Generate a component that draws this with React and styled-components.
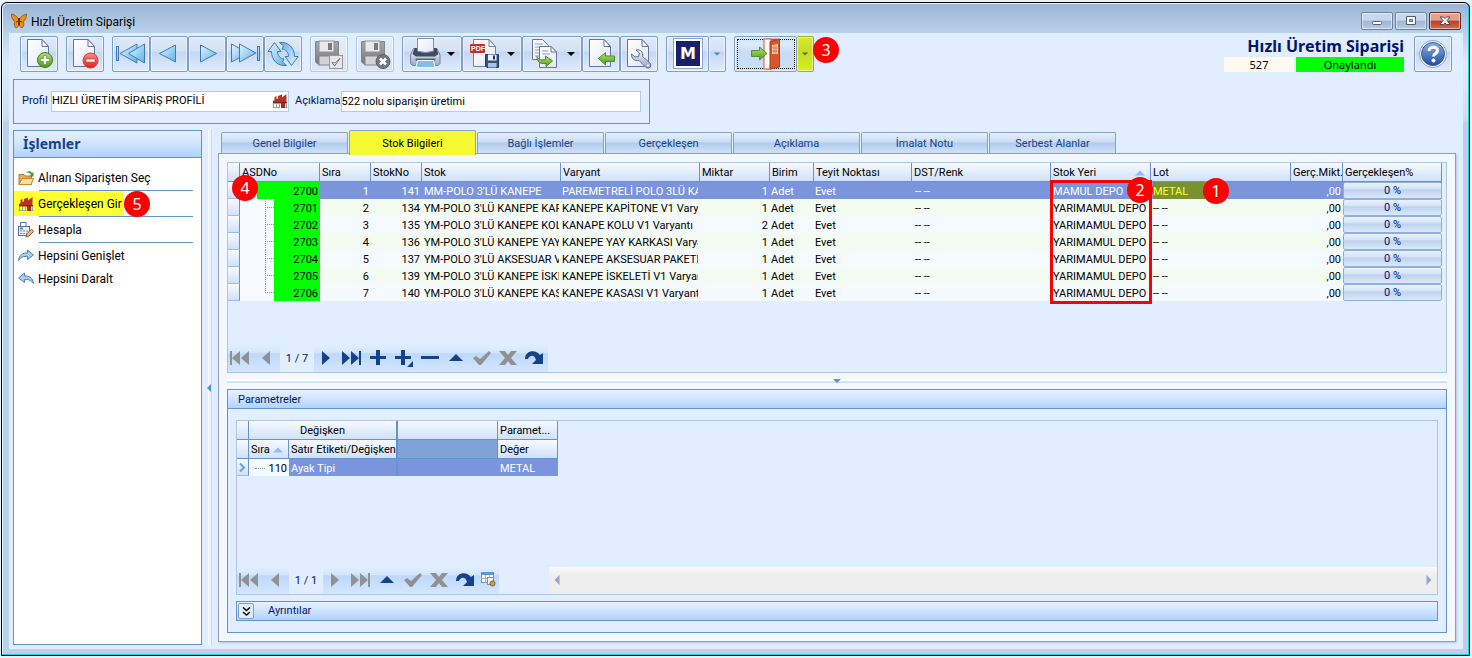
import React from "react";
import styled, { createGlobalStyle, css } from "styled-components";

const stockRows = [
  ["2700", "1", "141", "MM-POLO 3'LÜ KANEPE", "PAREMETRELİ POLO 3LÜ KA", "1", "MAMUL DEPO", "METAL"],
  ["2701", "2", "134", "YM-POLO 3'LÜ KANEPE KAPİ", "KANEPE KAPİTONE V1 Varya", "1", "YARIMAMUL DEPO", "-- --"],
  ["2702", "3", "135", "YM-POLO 3'LÜ KANEPE KOLU", "KANAPE KOLU V1 Varyantı", "2", "YARIMAMUL DEPO", "-- --"],
  ["2703", "4", "136", "YM-POLO 3'LÜ KANEPE YAY K", "KANEPE YAY KARKASI Varya", "1", "YARIMAMUL DEPO", "-- --"],
  ["2704", "5", "137", "YM-POLO 3'LÜ AKSESUAR VE", "KANEPE AKSESUAR PAKETLE", "1", "YARIMAMUL DEPO", "-- --"],
  ["2705", "6", "139", "YM-POLO 3'LÜ KANEPE İSKEL", "KANEPE İSKELETİ V1 Varyan", "1", "YARIMAMUL DEPO", "-- --"],
  ["2706", "7", "140", "YM-POLO 3'LÜ KANEPE KASA", "KANEPE KASASI V1 Varyantı", "1", "YARIMAMUL DEPO", "-- --"],
];

const stockColumns = [
  ["", 12],
  ["ASDNo", 80],
  ["Sıra", 51],
  ["StokNo", 51],
  ["Stok", 139],
  ["Varyant", 139],
  ["Miktar", 70],
  ["Birim", 44],
  ["Teyit Noktası", 98],
  ["DST/Renk", 139],
  ["Stok Yeri", 100],
  ["Lot", 140],
  ["Gerç.Mikt.", 52],
  ["Gerçekleşen%", 99],
];

const tabs = [
  "Genel Bilgiler",
  "Stok Bilgileri",
  "Bağlı İşlemler",
  "Gerçekleşen",
  "Açıklama",
  "İmalat Notu",
  "Serbest Alanlar",
];

/* ---------- icons ---------- */

function Icon({ size = 32, children }) {
  return (
    <svg width={size} height={size} viewBox={`0 0 ${size} ${size}`} aria-hidden="true">
      {children}
    </svg>
  );
}

function Defs() {
  return (
    <HiddenSvg width="0" height="0" aria-hidden="true">
      <defs>
        <linearGradient id="blue" x1="0" y1="0" x2="1" y2="1">
          <stop offset="0" stopColor="#e4f6ff" />
          <stop offset="1" stopColor="#5fb0e6" />
        </linearGradient>
        <linearGradient id="paper" x1="0" y1="0" x2="1" y2="1">
          <stop offset="0" stopColor="#ffffff" />
          <stop offset="1" stopColor="#e3e8f5" />
        </linearGradient>
        <linearGradient id="green" x1="0" y1="0" x2="0" y2="1">
          <stop offset="0" stopColor="#b5e07a" />
          <stop offset="1" stopColor="#4d9c17" />
        </linearGradient>
        <linearGradient id="red" x1="0" y1="0" x2="0" y2="1">
          <stop offset="0" stopColor="#ff8d85" />
          <stop offset="1" stopColor="#e3201b" />
        </linearGradient>
        <linearGradient id="gray" x1="0" y1="0" x2="0" y2="1">
          <stop offset="0" stopColor="#a9a9ab" />
          <stop offset="1" stopColor="#77777a" />
        </linearGradient>
        <linearGradient id="steel" x1="0" y1="0" x2="0" y2="1">
          <stop offset="0" stopColor="#f4f6fb" />
          <stop offset="1" stopColor="#9aa6bf" />
        </linearGradient>
        <linearGradient id="help" x1="0" y1="0" x2="0" y2="1">
          <stop offset="0" stopColor="#89b0e2" />
          <stop offset="1" stopColor="#1f4fa0" />
        </linearGradient>
      </defs>
    </HiddenSvg>
  );
}

const Paper = () => (
  <>
    <path d="M4.5 1.5H19L25.5 8.5V28.5H4.5Z" fill="url(#paper)" stroke="#66749f" />
    <path d="M19 1.5V8.5H25.5Z" fill="#fff" stroke="#66749f" />
  </>
);

const NewIcon = () => (
  <Icon>
    <Paper />
    <circle cx="22" cy="22" r="7.5" fill="url(#green)" stroke="#3c7a1c" />
    <path d="M20.5 17.5h3v3h3v3h-3v3h-3v-3h-3v-3h3z" fill="#fff" stroke="#4d8a2c" strokeWidth="0.6" />
  </Icon>
);
const DeleteIcon = () => (
  <Icon>
    <Paper />
    <circle cx="21.5" cy="22.5" r="7.5" fill="url(#red)" stroke="#cf3a35" />
    <rect x="17" y="21" width="9" height="3" fill="#fff" stroke="#b52420" strokeWidth="0.5" />
  </Icon>
);
const FirstIcon = () => (
  <Icon>
    <g fill="url(#blue)" stroke="#4079b5">
      <rect x="1.5" y="8.5" width="2" height="14" />
      <path d="M5 15.500L22 6V25Z" />
      <path d="M13.500 15.500L29.500 6V25Z" />
    </g>
  </Icon>
);
const PrevIcon = () => (
  <Icon>
    <path d="M6.500 15.500L22.500 7V24Z" fill="url(#blue)" stroke="#4079b5" />
  </Icon>
);
const NextIcon = () => (
  <Icon>
    <path d="M25.500 15.500L9.500 7V24Z" fill="url(#blue)" stroke="#4079b5" />
  </Icon>
);
const LastIcon = () => (
  <Icon>
    <g fill="url(#blue)" stroke="#4079b5">
      <path d="M19 15L2.500 6V24Z" />
      <path d="M27 15L10.500 6V24Z" />
      <rect x="28.500" y="8.500" width="2" height="14" />
    </g>
  </Icon>
);
const refreshArrow = "M7.500 4.500L14 13.500H10.500C10.500 17.500 13 20.500 17 21L15.500 24L19.500 27.500C10.500 28.500 4.500 22 4.500 13.500H1Z";
const RefreshIcon = () => (
  <Icon>
    <g fill="url(#blue)" stroke="#3b79b8" strokeLinejoin="round">
      <path d={refreshArrow} />
      <path d={refreshArrow} transform="rotate(180 16 16)" />
    </g>
  </Icon>
);
const GrayFloppy = () => (
  <>
    <path d="M2.500 3.500H25.500V26.500H5.500L2.500 24Z" fill="url(#gray)" stroke="#858588" />
    <rect x="6" y="3" width="15" height="11" fill="#e9e9ec" stroke="#929296" />
    <rect x="15" y="5" width="4" height="7" fill="#7a7a7e" />
    <rect x="6" y="18" width="16" height="9" fill="#d4d4d8" stroke="#858588" />
  </>
);
const SaveIcon = () => (
  <Icon>
    <GrayFloppy />
    <rect x="16.500" y="17.500" width="13" height="13" fill="#e6e6ea" stroke="#97979b" />
    <path d="M19 24.500L21.500 28L27 20.500L22 25Z" fill="#fff" stroke="#77777a" />
  </Icon>
);
const CancelIcon = () => (
  <Icon>
    <GrayFloppy />
    <circle cx="24" cy="23.500" r="7" fill="#77777a" stroke="#616165" />
    <path d="M21 20.500L27 26.500M27 20.500L21 26.500" stroke="#fff" strokeWidth="2.600" />
  </Icon>
);
const PrintIcon = () => (
  <Icon>
    <path d="M1.500 17L4.500 10.500H28L31 17V25.500L29 27.500H3.500L1.500 25.500Z" fill="url(#steel)" stroke="#76829f" />
    <path d="M5.500 10H27.500L29.500 16L26 18.500H7L3.500 16Z" fill="#3f4a63" />
    <path d="M8.500 0.500H24.500V13Q16.500 16 8.500 13Z" fill="url(#paper)" stroke="#8490ac" />
    <path d="M6.500 20.500h20v2h-20z" fill="#556080" />
    <path d="M8.500 22.500H24.500L26 29.500H7Z" fill="#7cc0ee" stroke="#f2f8ff" />
  </Icon>
);
const PdfIcon = () => (
  <Icon>
    <path d="M4.500 1.500H20L26.500 8.500V28.500H4.500Z" fill="url(#paper)" stroke="#7482ab" />
    <path d="M20 1.500V8.500H26.500Z" fill="#fff" stroke="#7482ab" />
    <rect x="1" y="6" width="15" height="9" rx="1" fill="#cf2b2b" />
    <text x="2" y="13" fontSize="7" fontWeight="700" fill="#fff" fontFamily="Liberation Sans, sans-serif">PDF</text>
    <path d="M16.500 16.500H29.500V29.500H18L16.500 28Z" fill="#3f527c" stroke="#22325a" />
    <rect x="19" y="16.500" width="8.500" height="6" fill="#e8f1ff" />
    <rect x="24" y="17.500" width="2" height="4" fill="#22325a" />
    <rect x="19" y="25" width="8.500" height="4.500" fill="#9fc8ee" />
  </Icon>
);
const CopyIcon = () => (
  <Icon>
    <path d="M3.500 1.500H13.500L19.500 7.500V21.500H3.500Z" fill="url(#paper)" stroke="#66749f" />
    <path d="M6 6h8M6 9h6M6 12h5M6 15h5M6 18h5" stroke="#8a9cc7" />
    <path d="M10.500 8.500H22L27.500 14V29.500H10.500Z" fill="url(#paper)" stroke="#66749f" />
    <path d="M22 8.500V14H27.500Z" fill="#fff" stroke="#66749f" />
    <path d="M13 13h6M13 16h8" stroke="#8a9cc7" />
    <path d="M8 18.500C10 22 13 22.500 16.500 21.500V18L23.500 23L17 28.500V25.500C11 26 8 24 8 18.500Z" fill="url(#green)" stroke="#4b8f22" />
  </Icon>
);
const ImportIcon = () => (
  <Icon>
    <Paper />
    <path d="M13.500 20.500L20.500 14.500V18H29.500V23.500H20.500V27Z" fill="url(#green)" stroke="#4b8f22" />
  </Icon>
);
const ToolIcon = () => (
  <Icon>
    <Paper />
    <path
      d="M8.500 16C8 20 11.500 23.500 16 22.500L23 29.500Q25.500 31 27.500 29Q28.500 27 27 25L19.500 18.500C20.500 14.500 18 11 13 12L16.500 15L15.500 18.500L12 19Z"
      fill="url(#steel)"
      stroke="#5f6e8f"
    />
    <circle cx="25" cy="27.500" r="1" fill="#fff" />
  </Icon>
);
const MIcon = () => (
  <Icon>
    <rect x="1.500" y="0.500" width="29" height="30" fill="#fff" stroke="#8fa3d0" />
    <rect x="4" y="3" width="24" height="25" fill="#18206c" />
    <text x="16" y="21" textAnchor="middle" fontSize="16" fontWeight="700" fill="#fff" fontFamily="DejaVu Sans, sans-serif">M</text>
  </Icon>
);
const ExitIcon = () => (
  <Icon>
    <path d="M16 1.500H29M16 30.500H21" stroke="#cf4a20" strokeWidth="1.500" />
    <rect x="14" y="1" width="7" height="30" fill="#fff" stroke="#d2562c" />
    <path d="M20 3.500L29.500 1V29L20 31Z" fill="#d9552a" stroke="#b43f18" />
    <path d="M22 7L28 6V16H22Z" fill="#ecdcc0" />
    <path d="M24 6.500V16M26 6.500V16M22 10h6M22 13h6" stroke="#b4521f" strokeWidth="0.600" />
    <path d="M1.500 12.500H9.500V9L17 15.500L9.500 22V18.500H1.500Z" fill="url(#green)" stroke="#51912e" />
  </Icon>
);
const HelpIcon = () => (
  <Icon>
    <circle cx="16" cy="16" r="13.500" fill="#fff" stroke="#8e9dbd" />
    <circle cx="16" cy="16" r="11.500" fill="url(#help)" stroke="#32599c" />
    <path d="M12 13C12 8 20.500 8 20.500 12.500C20.500 15.500 16.500 15.500 16.500 18.500" fill="none" stroke="#fff" strokeWidth="3" />
    <circle cx="16.500" cy="22.500" r="2" fill="#fff" />
  </Icon>
);
const ButterflyIcon = () => (
  <Icon size={16}>
    <path
      d="M8 7C6.500 3.500 3.500 1.500 0.500 1C0.500 4.500 1.500 7.500 4 8.500C2.500 10 3 13.500 5 15C7 14.500 8 12 8 9.500C8 12 9 14.500 11 15C13 13.500 13.500 10 12 8.500C14.500 7.500 15.500 4.500 15.500 1C12.500 1.500 9.500 3.500 8 7Z"
      fill="#f08f12"
      stroke="#8f4c12"
      strokeWidth="0.800"
    />
    <path d="M8 5V12" stroke="#4d260b" strokeWidth="1.500" />
    <path d="M5 9L7.500 8M11 9L8.500 8" stroke="#6b370c" />
  </Icon>
);
const FactoryIcon = () => (
  <Icon size={16}>
    <path d="M1 8L2.500 7V4L4.500 3V6L6 5.500V3L10 1.500V4.500L14.500 1V9L15.500 10H1Z" fill="#b5321f" />
    <path d="M1 9H15V10.500H1Z" fill="#7e2418" />
    <path d="M1.500 10.500V14.500M4.500 11V14.500M7.500 11V14.500M14.500 10.500V15" stroke="#93a0ab" />
    <path d="M9 10H13V15H9Z" fill="#a62a1c" />
    <path d="M1 14.500H8M13 14.500H15.500" stroke="#93a0ab" />
  </Icon>
);
const FolderIcon = () => (
  <Icon size={16}>
    <path d="M1 14.500V4.500H6L7.500 6H13.500V14.500Z" fill="#e3ac55" stroke="#b57a2b" />
    <path d="M1 14.500L4 8.500H15.500L13 14.500Z" fill="#fbdf9c" stroke="#c1873a" />
    <path d="M8 3C10 0.500 13 1 14 3L15.500 2V6.500H11.500L13 4.500C12 3 10 2.500 8 3Z" fill="#4f9438" />
  </Icon>
);
const CalcIcon = () => (
  <Icon size={16}>
    <path d="M2.500 0.500H8V4.500H2.500Z" fill="#fff" stroke="#5b6f9c" />
    <rect x="0.500" y="4.500" width="11" height="9" fill="#e9effb" stroke="#5b6f9c" />
    <path d="M2 6.500h3" stroke="#3ea75c" strokeWidth="2" />
    <path d="M2 9h8M2 11.500h8" stroke="#7488b6" strokeDasharray="2 1" />
    <path d="M8 15L9 11.500L13.500 7L15.500 9.500L11 14Z" fill="#f0b878" stroke="#8b6038" />
  </Icon>
);
const CurveIcon = ({ flip }) => (
  <Icon size={16}>
    <g transform={flip ? "translate(16 0) scale(-1 1)" : undefined}>
      <path d="M0.500 12.500C1 7 5 4.500 9.500 5V2L15.500 7L9.500 11.500V8.500C6 8 3 9 0.500 12.500Z" fill="#a9cdf0" stroke="#4a7fb8" />
    </g>
  </Icon>
);
const TableIcon = () => (
  <Icon size={16}>
    <rect x="1.500" y="1.500" width="12" height="10" fill="#fff" stroke="#6b94c9" />
    <rect x="1" y="1" width="13" height="3" fill="#5b96dd" />
    <path d="M5.500 4v8M9.500 4v8M1 7.500h12" stroke="#9ab6d9" />
    <rect x="7.500" y="6.500" width="6" height="7" fill="#eef3fb" stroke="#7a8fb5" />
    <circle cx="12.500" cy="12.500" r="2.500" fill="#d59a4b" stroke="#8c5c28" />
  </Icon>
);

const navPaths = {
  first: "M1 5h2v14h-2zM11 5v14l-8-7zM20 5v14l-8-7z",
  prev: "M15 5v14l-8-7z",
  next: "M7 5v14l8-7z",
  last: "M1 5v14l8-7zM10 5v14l8-7zM18 5h2v14h-2z",
  plus: "M9 4h4v6h6v3h-6v6h-4v-6h-6v-3h6z",
  plusMore: "M8 4h4v6h6v3h-6v6h-4v-6h-6v-3h6zM20 15v6h-6z",
  minus: "M2 10h18v3h-18z",
  up: "M4 15l7-7l7 7z",
  check: "M2 12l3-2l4 3l9-8l2 2l-10 12h-2z",
  cross: "M2 5h6l3 4l3-4h6l-6 7l6 7h-6l-3-4l-3 4h-6l6-7z",
  redo: "M2 13C2 4 13 3 17 9l3-2v11h-11l4-4C12 9 7 8 5 13z",
};

function NavButton({ name, label, disabled }) {
  return (
    <NavBtn type="button" aria-label={label} disabled={disabled}>
      <Icon size={22}>
        <path d={navPaths[name]} fill={disabled ? "#919191" : "#16428b"} />
      </Icon>
    </NavBtn>
  );
}

const trianglePaths = {
  down: "M0 2h8L4 6z",
  up: "M0 6h8L4 2z",
  left: "M6 0v8L2 4z",
  right: "M2 0v8l4-4z",
};

function Triangle({ dir, color, size = 8 }) {
  return (
    <svg width={size} height={size} viewBox="0 0 8 8" aria-hidden="true">
      <path d={trianglePaths[dir]} fill={color} />
    </svg>
  );
}

/* ---------- page parts ---------- */

function Toolbar() {
  return (
    <ToolbarRow>
      <ToolGroup><ToolButton aria-label="Yeni"><NewIcon /></ToolButton></ToolGroup>
      <ToolGroup><ToolButton aria-label="Sil"><DeleteIcon /></ToolButton></ToolGroup>
      <ToolGroup>
        <ToolButton aria-label="İlk"><FirstIcon /></ToolButton>
        <ToolButton aria-label="Önceki"><PrevIcon /></ToolButton>
        <ToolButton aria-label="Sonraki"><NextIcon /></ToolButton>
        <ToolButton aria-label="Son"><LastIcon /></ToolButton>
        <ToolButton aria-label="Yenile"><RefreshIcon /></ToolButton>
      </ToolGroup>
      <ToolGroup><ToolButton aria-label="Kaydet" disabled><SaveIcon /></ToolButton></ToolGroup>
      <ToolGroup><ToolButton aria-label="İptal" disabled><CancelIcon /></ToolButton></ToolGroup>
      <ToolGroup>
        <ToolButton $wide aria-label="Yazdır"><PrintIcon /><Triangle dir="down" color="#000" /></ToolButton>
        <ToolButton $wide aria-label="PDF kaydet"><PdfIcon /><Triangle dir="down" color="#000" /></ToolButton>
        <ToolButton $wide aria-label="Kopyala"><CopyIcon /><Triangle dir="down" color="#000" /></ToolButton>
        <ToolButton aria-label="İçe aktar"><ImportIcon /></ToolButton>
        <ToolButton aria-label="Ayarlar"><ToolIcon /></ToolButton>
      </ToolGroup>
      <ToolGroup>
        <SplitMain aria-label="M"><MIcon /></SplitMain>
        <SplitArrow aria-label="M seçenekleri"><Triangle dir="down" size={6} color="#4f7fbf" /></SplitArrow>
      </ToolGroup>
      <ToolGroup>
        <SplitMain $exit aria-label="Çıkış"><FocusBox><ExitIcon /></FocusBox></SplitMain>
        <SplitArrow $marked aria-label="Çıkış seçenekleri">
          <Triangle dir="down" size={6} color="#55701d" />
        </SplitArrow>
        <ExitBadge>3</ExitBadge>
      </ToolGroup>
      <Status>
        <StatusTitle>Hızlı Üretim Siparişi</StatusTitle>
        <StatusRow>
          <StatusNo>527</StatusNo>
          <StatusState>Onaylandı</StatusState>
        </StatusRow>
      </Status>
      <ToolButton aria-label="Yardım"><HelpIcon /></ToolButton>
    </ToolbarRow>
  );
}

function Sidebar() {
  return (
    <SidePanel>
      <SideTitle>İşlemler</SideTitle>
      <SideList>
        <SideItem $line><SideButton type="button"><FolderIcon />Alınan Siparişten Seç</SideButton></SideItem>
        <SideItem $line>
          <SideButton type="button" $marked><FactoryIcon />Gerçekleşen Gir</SideButton>
          <SideBadge>5</SideBadge>
        </SideItem>
        <SideItem $line><SideButton type="button"><CalcIcon />Hesapla</SideButton></SideItem>
        <SideItem><SideButton type="button"><CurveIcon />Hepsini Genişlet</SideButton></SideItem>
        <SideItem><SideButton type="button"><CurveIcon flip />Hepsini Daralt</SideButton></SideItem>
      </SideList>
    </SidePanel>
  );
}

function StockGrid() {
  return (
    <GridBox>
      <GridTable>
        <colgroup>
          {stockColumns.map(([name, width]) => <Col key={name} $w={width} />)}
        </colgroup>
        <thead>
          <tr>
            {stockColumns.map(([name]) => (
              <HeadCell key={name}>
                {name === "Stok Yeri" ? (
                  <SortHead>{name}<Triangle dir="up" size={10} color="#8fbdf5" /></SortHead>
                ) : name}
              </HeadCell>
            ))}
          </tr>
        </thead>
        <tbody>
          {stockRows.map(([no, sira, stokNo, stok, varyant, miktar, yer, lot], i) => (
            <Row key={no} $selected={i === 0}>
              <MarkerCell>
                {i === 0 && <RowBadge>4</RowBadge>}
              </MarkerCell>
              <TreeCell>
                <TreeInner>
                  {i > 0 && <Branch $last={i === stockRows.length - 1} />}
                  <GreenCell>{no}</GreenCell>
                </TreeInner>
              </TreeCell>
              <Cell $right>{sira}</Cell>
              <Cell $right>{stokNo}</Cell>
              <Cell $pad={2} $gutter>{stok}</Cell>
              <Cell $gutter>{varyant}</Cell>
              <Cell $right>{miktar}</Cell>
              <Cell>Adet</Cell>
              <Cell>Evet</Cell>
              <Cell $pad={3}>-- --</Cell>
              <AnchorCell $pad={2}>
                {yer}
                {i === 0 && <RedFrame />}
                {i === 0 && <DepoBadge>2</DepoBadge>}
              </AnchorCell>
              <AnchorCell $pad={2} $flush={i === 0}>
                {i === 0 ? <LotMark>{lot}</LotMark> : lot}
                {i === 0 && <LotBadge>1</LotBadge>}
              </AnchorCell>
              <Cell $right>,00</Cell>
              <ButtonCell><PercentButton type="button">0 %</PercentButton></ButtonCell>
            </Row>
          ))}
        </tbody>
      </GridTable>
      <NavBar>
        <NavButton name="first" label="İlk" disabled />
        <NavButton name="prev" label="Önceki" disabled />
        <NavCount>1 / 7</NavCount>
        <NavButton name="next" label="Sonraki" />
        <NavButton name="last" label="Son" />
        <NavButton name="plus" label="Ekle" />
        <NavButton name="plusMore" label="Alt kayıt ekle" />
        <NavButton name="minus" label="Sil" />
        <NavButton name="up" label="Düzenle" />
        <NavButton name="check" label="Onayla" disabled />
        <NavButton name="cross" label="Vazgeç" disabled />
        <NavButton name="redo" label="Yenile" />
      </NavBar>
    </GridBox>
  );
}

function Parameters() {
  return (
    <Group>
      <GroupTitle>Parametreler</GroupTitle>
      <GroupBody>
        <ParamBox>
          <ParamTable>
            <colgroup>
              <Col $w={12} /><Col $w={40} /><Col $w={109} /><Col $w={100} /><Col $w={60} />
            </colgroup>
            <thead>
              <tr>
                <HeadCell />
                <HeadCell colSpan={2} $center $thick>Değişken</HeadCell>
                <HeadCell />
                <HeadCell>Paramet...</HeadCell>
              </tr>
              <tr>
                <HeadCell />
                <HeadCell><SortHead>Sıra<Triangle dir="up" size={10} color="#8fbdf5" /></SortHead></HeadCell>
                <HeadCell $thick>Satır Etiketi/Değişken</HeadCell>
                <EmptyHead />
                <HeadCell>Değer</HeadCell>
              </tr>
            </thead>
            <tbody>
              <Row $selected>
                <MarkerCell>
                  <svg width="8" height="9" viewBox="0 0 8 9" aria-hidden="true">
                    <path d="M2 0.500L6 4.500L2 8.500" fill="none" stroke="#6ba3e0" strokeWidth="2" />
                  </svg>
                </MarkerCell>
                <WhiteCell><Dots />110</WhiteCell>
                <Cell $thick $pad={2}>Ayak Tipi</Cell>
                <Cell />
                <Cell $pad={2}>METAL</Cell>
              </Row>
            </tbody>
          </ParamTable>
          <ParamFoot>
            <NavBar>
              <NavButton name="first" label="İlk" disabled />
              <NavButton name="prev" label="Önceki" disabled />
              <NavCount>1 / 1</NavCount>
              <NavButton name="next" label="Sonraki" disabled />
              <NavButton name="last" label="Son" disabled />
              <NavButton name="up" label="Düzenle" />
              <NavButton name="check" label="Onayla" disabled />
              <NavButton name="cross" label="Vazgeç" disabled />
              <NavButton name="redo" label="Yenile" />
              <NavBtn type="button" $small aria-label="Tablo"><TableIcon /></NavBtn>
            </NavBar>
            <ScrollBar>
              <ScrollArrow type="button" aria-label="Sola kaydır"><Triangle dir="left" size={10} color="#98a5c9" /></ScrollArrow>
              <ScrollArrow type="button" aria-label="Sağa kaydır"><Triangle dir="right" size={10} color="#98a5c9" /></ScrollArrow>
            </ScrollBar>
          </ParamFoot>
        </ParamBox>
        <Details>
          <DetailsButton type="button" aria-label="Ayrıntıları aç">
            <svg width="9" height="9" viewBox="0 0 9 9" aria-hidden="true">
              <path d="M1 0.500L4.500 3.500L8 0.500M1 5L4.500 8L8 5" fill="none" stroke="#000" strokeWidth="1.500" />
            </svg>
          </DetailsButton>
          Ayrıntılar
        </Details>
      </GroupBody>
    </Group>
  );
}

function App() {
  return (
    <>
      <GlobalStyle />
      <Defs />
      <Window>
        <TitleBar>
          <ButterflyIcon />
          <Caption>Hızlı Üretim Siparişi</Caption>
          <CaptionButtons>
            <CaptionButton aria-label="Simge durumuna küçült">
              <Icon size={14}><rect x="2.500" y="7.500" width="9" height="3" rx="1" fill="#fff" stroke="#555f70" /></Icon>
            </CaptionButton>
            <CaptionButton aria-label="Ekranı kapla">
              <Icon size={14}><path d="M2.500 2.500h9v8h-9zM5.500 5.500v2h3v-2z" fill="#fff" fillRule="evenodd" stroke="#555f70" /></Icon>
            </CaptionButton>
            <CaptionButton $close aria-label="Kapat">
              <Icon size={14}><path d="M2 3h3.500L7 4.500L8.500 3H12L9 6.500L12 10.500H8.500L7 9L5.500 10.500H2L5 6.500Z" fill="#fff" stroke="#5c4446" /></Icon>
            </CaptionButton>
          </CaptionButtons>
        </TitleBar>
        <Content>
          <Toolbar />
          <ProfileBox>
            <FieldLabel htmlFor="profil">Profil</FieldLabel>
            <ProfileField>
              <ProfileInput id="profil" defaultValue="HIZLI ÜRETİM SİPARİŞ PROFİLİ" />
              <FactoryIcon />
            </ProfileField>
            <FieldLabel htmlFor="aciklama">Açıklama</FieldLabel>
            <DescInput id="aciklama" defaultValue="522 nolu siparişin üretimi" />
          </ProfileBox>
          <Main>
            <Sidebar />
            <VSplitter><Triangle dir="left" color="#5c8fd0" /></VSplitter>
            <TabArea>
              <TabList role="tablist">
                {tabs.map((tab) => (
                  <Tab key={tab} type="button" role="tab" $active={tab === "Stok Bilgileri"} aria-selected={tab === "Stok Bilgileri"}>
                    {tab}
                  </Tab>
                ))}
              </TabList>
              <TabPage>
                <StockGrid />
                <HSplitter><Triangle dir="down" color="#5c8fd0" /></HSplitter>
                <Parameters />
              </TabPage>
            </TabArea>
          </Main>
        </Content>
      </Window>
    </>
  );
}

export default App;

/* ---------- styles ---------- */

const uiFont = `Roboto, "Noto Sans", sans-serif`;
const titleFont = `"Noto Sans", "Open Sans", sans-serif`;
const border = "#6593cf";
const softBorder = "#b0c4e4";
const headFill = "linear-gradient(#f8fbff, #dfebfd 60%, #cfe1fb)";
const barFill = "linear-gradient(#e6f1ff, #cfe3ff 50%, #afd2ff)";

const GlobalStyle = createGlobalStyle`
  * {
    box-sizing: border-box;
  }
  body {
    margin: 0;
    background: #e6f3ff;
    font-family: ${uiFont};
    font-size: 11px;
    line-height: 16px;
    color: #000;
  }
  button, input {
    font: inherit;
    color: inherit;
    padding: 0;
    margin: 0;
  }
  svg {
    display: block;
    flex: none;
  }
`;

const HiddenSvg = styled.svg`
  position: absolute;
`;

const Window = styled.div`
  display: flex;
  flex-direction: column;
  min-height: calc(100vh - 4px);
  margin: 2px 2px 2px 1px;
  padding: 0 6px 6px 7px;
  border: 1px solid #000;
  border-radius: 6px 6px 0 0;
  background: linear-gradient(#9ab4d3, #b9d1ea 30px, #dcebfa 60px, #c9dff4 116px, #b9d1ea 120px);
  box-shadow: inset -1px -1px 0 #2cc8e6, inset 1px 1px 0 #e9f4ff;
`;

const TitleBar = styled.header`
  display: flex;
  align-items: center;
  gap: 4px;
  height: 30px;
  padding: 6px 2px 0;
`;

const Caption = styled.div`
  padding-top: 2px;
  font-size: 12px;
`;

const CaptionButtons = styled.div`
  display: flex;
  gap: 2px;
  margin-left: auto;
`;

const CaptionButton = styled.button`
  display: flex;
  align-items: center;
  justify-content: center;
  width: 32px;
  height: 18px;
  border: 1px solid ${({ $close }) => ($close ? "#6b2a2a" : "#71839c")};
  border-radius: 2px;
  background: ${({ $close }) =>
    $close
      ? "linear-gradient(#e3a190 45%, #bb3f28 50%, #d06a50)"
      : "linear-gradient(#c6d8eb 45%, #9db6d2 50%, #b5cde5)"};
  box-shadow: inset 0 0 0 1px rgba(255, 255, 255, 0.5);
`;

const Content = styled.div`
  display: flex;
  flex: 1;
  flex-direction: column;
  padding: 3px 7px 4px 4px;
  background: #e1eeff;
`;

const ToolbarRow = styled.div`
  display: flex;
  gap: 8px;
  padding: 0 4px 0 7px;
`;

const ToolGroup = styled.div`
  position: relative;
  display: flex;
`;

const toolButton = css`
  display: flex;
  align-items: center;
  justify-content: center;
  height: 36px;
  border: 1px solid #7e9fc8;
  border-radius: 2px;
  background: linear-gradient(#dfeafa, #d4e2f6 40%, #c4d7f1 45%, #dfecfd);
  box-shadow: inset 0 0 0 1px rgba(255, 255, 255, 0.5);
`;

const ToolButton = styled.button.attrs({ type: "button" })`
  ${toolButton}
  width: ${({ $wide }) => ($wide ? 60 : 38)}px;
  gap: 6px;

  &:disabled {
    border-color: #b5c8e2;
    background: linear-gradient(#e3eefd, #d6e4f8);
  }
`;

const SplitMain = styled.button.attrs({ type: "button" })`
  ${toolButton}
  width: ${({ $exit }) => ($exit ? 63 : 43)}px;
  ${({ $exit }) => $exit && "background: linear-gradient(#c9e2f8, #dcebfc 20%, #c9dbf3 50%, #c5e3fa);"}
`;

const SplitArrow = styled.button.attrs({ type: "button" })`
  ${toolButton}
  width: 17px;
  border-left: 0;
  ${({ $marked }) =>
    $marked &&
    `
    background: linear-gradient(#d9e834, #c7dc22 45%, #d8f01c);
    border-color: #9fb41c #6f9fc0 #9fb41c #9fb41c;
  `}
`;

const FocusBox = styled.span`
  display: flex;
  align-items: center;
  justify-content: center;
  width: 58px;
  height: 30px;
  border: 1px dotted #000;
`;

const Badge = styled.span`
  position: absolute;
  z-index: 2;
  width: 26px;
  height: 26px;
  border-radius: 50%;
  background: #f00;
  color: #fff;
  font-family: ${titleFont};
  font-size: 16px;
  line-height: 26px;
  text-align: center;
`;

const ExitBadge = styled(Badge)`
  top: 1px;
  left: 79px;
`;

const Status = styled.div`
  display: flex;
  flex-direction: column;
  align-items: flex-end;
  justify-content: space-between;
  margin-left: auto;
  margin-right: 2px;
`;

const StatusTitle = styled.div`
  color: #00156e;
  font-family: ${titleFont};
  font-size: 16px;
  font-weight: 700;
  line-height: 20px;
`;

const StatusRow = styled.div`
  display: flex;
  gap: 2px;
  font-family: ${titleFont};
  line-height: 15px;
  text-align: center;
`;

const StatusNo = styled.div`
  width: 70px;
  background: #fffaf0;
`;

const StatusState = styled.div`
  width: 108px;
  background: #0f0;
`;

const ProfileBox = styled.section`
  display: flex;
  align-items: center;
  align-self: flex-start;
  height: 45px;
  margin: 7px 0 6px;
  padding: 0 8px 1px;
  border: 1px solid ${border};
`;

const FieldLabel = styled.label`
  min-width: 29px;
  color: #00156e;
`;

const ProfileField = styled.div`
  display: flex;
  align-items: center;
  width: 238px;
  height: 21px;
  margin-right: 6px;
  border: 1px solid #b3cbe9;
  background: #fff;
`;

const ProfileInput = styled.input`
  flex: 1;
  min-width: 0;
  border: 0;
  background: transparent;
`;

const DescInput = styled.input`
  width: 300px;
  height: 21px;
  border: 1px solid #b3cbe9;
  background: #fff;
`;

const Main = styled.div`
  display: flex;
  flex: 1;
`;

const SidePanel = styled.aside`
  flex: none;
  width: 189px;
  border: 1px solid ${border};
  background: #fff;
`;

const SideTitle = styled.h2`
  height: 27px;
  margin: 0;
  padding: 0 9px;
  border-bottom: 1px solid ${border};
  background: ${barFill};
  color: #15428b;
  font-family: ${titleFont};
  font-size: 14px;
  font-weight: 700;
  line-height: 26px;
`;

const SideList = styled.ul`
  margin: 0;
  padding: 7px 0 0;
  list-style: none;
`;

const SideItem = styled.li`
  position: relative;
  height: ${({ $line }) => ($line ? 26 : 23)}px;

  ${({ $line }) =>
    $line &&
    css`
      &::after {
        content: "";
        position: absolute;
        right: 8px;
        bottom: 0;
        left: 25px;
        height: 1px;
        background: ${border};
      }
    `}
`;

const SideButton = styled.button`
  display: flex;
  align-items: center;
  gap: 4px;
  height: 25px;
  padding: 0 2px 0 4px;
  border: 0;
  background: ${({ $marked }) => ($marked ? "#ffff32" : "transparent")};
  font-size: 12px;
  white-space: nowrap;
`;

const SideBadge = styled(Badge)`
  top: 0;
  left: 110px;
`;

const VSplitter = styled.div`
  display: flex;
  flex: none;
  align-items: center;
  width: 10px;
  margin: 0 3px;
  background: linear-gradient(
    to right,
    #e1eeff 3px,
    #f8fbff 3px,
    #f8fbff 4px,
    #e8f2ff 4px,
    #e8f2ff 6px,
    #c8dcfa 6px,
    #c8dcfa 7px,
    #e1eeff 7px
  );
`;

const TabArea = styled.div`
  display: flex;
  flex: 1;
  flex-direction: column;
  min-width: 0;
  margin-bottom: 3px;
`;

const TabList = styled.div`
  display: flex;
  align-items: flex-end;
  gap: 1px;
  height: 23px;
  padding-left: 3px;
`;

const Tab = styled.button`
  width: 127px;
  height: 21px;
  padding-top: 2px;
  border: 1px solid #8ba0c8;
  border-bottom: 0;
  border-radius: 2px 2px 0 0;
  background: linear-gradient(#e6effb, #cadcf4 45%, #b0cbee 50%, #d0e2f8);
  color: #15428b;

  ${({ $active }) =>
    $active &&
    css`
      z-index: 1;
      height: 25px;
      margin-bottom: -2px;
      background: #f5f931;
      color: #000;
    `}
`;

const TabPage = styled.div`
  display: flex;
  flex: 1;
  flex-direction: column;
  padding: 8px;
  border: 1px solid #8ba0c8;
  background: #f3f8ff;
  box-shadow: 1px 1px 2px #b3c5e2;
`;

const GridBox = styled.section`
  display: flex;
  flex-direction: column;
  justify-content: space-between;
  height: 211px;
  border: 1px solid ${softBorder};
  background: #e1eeff;
`;

const GridTable = styled.table`
  width: 1214px;
  border-collapse: separate;
  border-spacing: 0;
  table-layout: fixed;
`;

const Col = styled.col`
  width: ${({ $w }) => $w}px;
`;

const HeadCell = styled.th`
  height: 19px;
  padding: 2px 2px 0;
  overflow: hidden;
  border-right: ${({ $thick }) => ($thick ? 2 : 1)}px solid ${border};
  border-bottom: 1px solid ${border};
  background: ${headFill};
  font-weight: 400;
  line-height: 16px;
  text-align: ${({ $center }) => ($center ? "center" : "left")};
  white-space: nowrap;
`;

const SortHead = styled.div`
  display: flex;
  align-items: center;
  justify-content: space-between;
  padding-right: 3px;
`;

const EmptyHead = styled.th`
  border-right: 1px solid ${border};
  border-bottom: 1px solid ${border};
  background: #7fa3d6;
`;

const Cell = styled.td`
  height: 17px;
  padding: 2px ${({ $right }) => ($right ? 2 : 1)}px 0 ${({ $pad }) => $pad || 1}px;
  overflow: hidden;
  ${({ $thick }) => $thick && `border-right: 2px solid ${border};`}
  ${({ $gutter }) => $gutter && "border-right: 2px solid transparent;"}
  line-height: 15px;
  text-align: ${({ $right }) => ($right ? "right" : "left")};
  white-space: nowrap;
`;

const AnchorCell = styled(Cell)`
  position: relative;
  overflow: visible;
  ${({ $flush }) => $flush && "padding-top: 0;"}
`;

const Row = styled.tr`
  background: #f5faff;

  &:nth-child(even) {
    background: #f4fcf2;
  }

  ${({ $selected }) =>
    $selected &&
    css`
      background: #7a95dd;

      ${Cell} {
        color: #fff;
      }
    `}
`;

const MarkerCell = styled.td`
  position: relative;
  padding: 0 1px;
  border-right: 1px solid ${border};
  border-bottom: 1px solid #9dbde8;
  background: ${headFill};
`;

const RowBadge = styled(Badge)`
  top: -7px;
  left: 4px;
`;

const TreeCell = styled.td`
  padding: 0;
  background: #f7fbff;
`;

const TreeInner = styled.div`
  display: flex;
  justify-content: flex-end;
  height: 17px;
  padding-left: 17px;
`;

const Branch = styled.span`
  flex: none;
  align-self: flex-start;
  width: 9px;
  height: ${({ $last }) => ($last ? 9 : 17)}px;
  margin-left: 8px;
  border-left: 1px dotted #7d8fa8;
  background: repeating-linear-gradient(to right, transparent 0 1px, #7d8fa8 1px 2px) 0 8px / 8px 1px no-repeat;
`;

const GreenCell = styled.span`
  flex: 1;
  padding: 2px 2px 0 0;
  background: #0f0;
  line-height: 15px;
  text-align: right;
`;

const RedFrame = styled.span`
  position: absolute;
  z-index: 1;
  top: -2px;
  left: -1px;
  width: 102px;
  height: 124px;
  border: 3px solid #f00;
`;

const DepoBadge = styled(Badge)`
  top: -5px;
  right: -2px;
`;

const LotMark = styled.span`
  display: block;
  width: 52px;
  height: 17px;
  padding-top: 2px;
  background: #78922f;
  color: #ffff32;
`;

const LotBadge = styled(Badge)`
  top: -4px;
  left: 52px;
`;

const ButtonCell = styled.td`
  padding: 0;
`;

const PercentButton = styled.button`
  display: block;
  width: 100%;
  height: 17px;
  padding-top: 1px;
  border: 1px solid #8fb0dc;
  border-radius: 2px;
  background: linear-gradient(#e9f1fc, #d5e3f7 40%, #bdd2f0 45%, #dbe8fa);
  color: #00156e;
  line-height: 14px;
`;

const NavBar = styled.div`
  display: flex;
  align-self: flex-start;
  height: 27px;
`;

const NavBtn = styled.button`
  display: flex;
  align-items: center;
  justify-content: center;
  width: ${({ $small }) => ($small ? 20 : 26)}px;
  height: 27px;
  padding: 0 2px 4px 0;
  border: 0;
  background: linear-gradient(#e1eeff, #d2e5ff 30%, #bcd8fd 32%, #d4e6ff);
`;

const NavCount = styled.span`
  width: 34px;
  color: #00156e;
  line-height: 27px;
  text-align: center;
`;

const HSplitter = styled.div`
  display: flex;
  align-items: center;
  justify-content: center;
  height: 16px;
  background: linear-gradient(transparent 6px, #fff 6px, #fff 8px, #dcebff 8px, #c3dbfb 10px, transparent 10px);
`;

const Group = styled.section`
  display: flex;
  flex: 1;
  flex-direction: column;
  border: 1px solid ${border};
  background: #e1eeff;
`;

const GroupTitle = styled.h3`
  height: 19px;
  margin: 0;
  padding: 2px 0 0 10px;
  border-bottom: 1px solid ${border};
  background: ${barFill};
  color: #00156e;
  font-size: 11px;
  font-weight: 400;
  line-height: 16px;
`;

const GroupBody = styled.div`
  display: flex;
  flex: 1;
  flex-direction: column;
  gap: 6px;
  padding: 11px 8px;
`;

const ParamBox = styled.div`
  display: flex;
  flex: 1;
  flex-direction: column;
  justify-content: space-between;
  border: 1px solid ${softBorder};
`;

const ParamTable = styled(GridTable)`
  width: 321px;
`;

const WhiteCell = styled.td`
  padding: 2px 2px 0 0;
  background: #f5faff;
  line-height: 15px;
  text-align: right;
`;

const Dots = styled.span`
  display: inline-block;
  width: 10px;
  height: 4px;
  margin-right: 3px;
  border-top: 1px dotted #7d8fa8;
`;

const ParamFoot = styled.div`
  display: flex;
  gap: 50px;
`;

const ScrollBar = styled.div`
  display: flex;
  flex: 1;
  align-items: center;
  justify-content: space-between;
  background: linear-gradient(#fafafa, #eee 30%, #eee);
`;

const ScrollArrow = styled.button`
  padding: 0 3px 2px;
  border: 0;
  background: transparent;
`;

const Details = styled.div`
  display: flex;
  align-items: center;
  gap: 14px;
  height: 20px;
  padding-left: 1px;
  border: 1px solid ${border};
  background: ${barFill};
  color: #00156e;
`;

const DetailsButton = styled.button`
  display: flex;
  align-items: center;
  justify-content: center;
  width: 16px;
  height: 16px;
  border: 1px solid #7e9fc8;
  border-radius: 2px;
  background: #e3eefc;
`;
